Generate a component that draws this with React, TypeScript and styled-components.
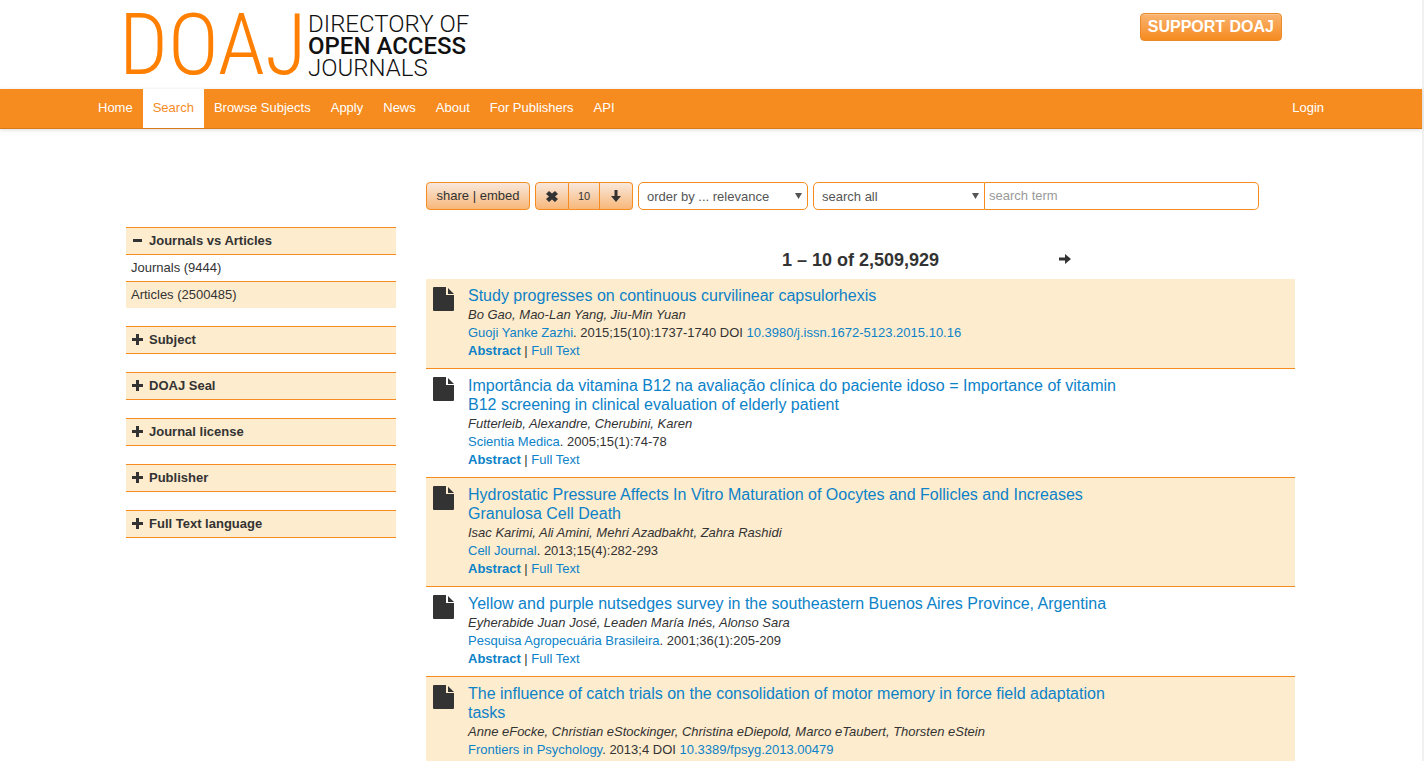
import React from "react";
import styled, { createGlobalStyle, css } from "styled-components";

const ORANGE = "#f68b1f";
const CREAM = "#feecce";

const GlobalStyle = createGlobalStyle`
  * { box-sizing: border-box; }
  html { background: #f1f1f1; }
  body {
    margin: 0;
    background: #f1f1f1;
    color: #333;
    font: 13px/18px "Liberation Sans", Arial, sans-serif;
    overflow-x: hidden;
  }
  a { color: #0c82c8; text-decoration: none; }
  a:hover { text-decoration: underline; }
`;

const Page = styled.div`
  margin-right: 2px;
  min-height: 100vh;
  background: #fff;
`;

const Container = styled.div`
  max-width: 1170px;
  margin: 0 auto;
`;

const Header = styled(Container).attrs({ as: "header" })`
  display: flex;
  justify-content: space-between;
  align-items: flex-start;
  height: 89px;
  padding: 13px 14px 0 0;
`;

const LogoLink = styled.a`
  display: flex;
  margin-left: -7px;
  color: #111;
  &:hover { text-decoration: none; }
`;

const LogoMark = styled.span`
  width: 189px;
  color: #ff7f00;
  font: 300 86px/64px "Roboto Condensed", Roboto, sans-serif;
`;

const LogoWords = styled.span`
  display: flex;
  flex-direction: column;
  font: 300 24px/22px Roboto, sans-serif;
  strong { font-weight: 500; }
`;

const SupportButton = styled.button`
  height: 28px;
  padding: 0 7px;
  border: 1px solid #e88a2c;
  border-radius: 4px;
  background: linear-gradient(#f9b471, ${ORANGE});
  box-shadow: inset 0 1px 0 rgba(255, 255, 255, 0.2);
  color: #fff;
  font: bold 16px/20px "Liberation Sans", Arial, sans-serif;
`;

const NavBar = styled.nav`
  height: 40px;
  background: ${ORANGE};
  border-bottom: 1px solid #d9791a;
  box-shadow: 0 1px 4px rgba(0, 0, 0, 0.15);
`;

const NavInner = styled.div`
  display: flex;
  justify-content: space-between;
  max-width: 1246px;
  margin: 0 auto;
`;

const NavGroup = styled.div`
  display: flex;
`;

const NavLink = styled.a<{ $active?: boolean }>`
  height: 39px;
  padding: 10px;
  color: #fff;
  ${(p) => p.$active && css`
    background: #fff;
    color: ${ORANGE};
  `}
`;

const Body = styled(Container).attrs({ as: "main" })`
  display: flex;
  gap: 30px;
  align-items: flex-start;
  padding: 53px 1px 0 0;
`;

const Sidebar = styled.aside`
  display: flex;
  flex-direction: column;
  flex: 0 0 270px;
  gap: 18px;
  padding-top: 45px;
`;

const FacetHead = styled.button`
  display: flex;
  align-items: center;
  gap: 6px;
  width: 100%;
  height: 28px;
  padding: 0 5px;
  border: 0;
  border-top: 1px solid ${ORANGE};
  border-bottom: 1px solid ${ORANGE};
  background: ${CREAM};
  color: #333;
  font: bold 13px/18px "Liberation Sans", Arial, sans-serif;
`;

const FacetValue = styled.a`
  display: block;
  height: 26px;
  padding: 4px 5px;
  color: #333;
  & + & {
    height: 27px;
    border-top: 1px solid ${ORANGE};
    background: ${CREAM};
  }
`;

const Results = styled.section`
  flex: 1;
  min-width: 0;
`;

const Toolbar = styled.form`
  display: flex;
  gap: 5px;
  margin-right: 36px;
`;

const ToolGroup = styled.div`
  display: flex;
`;

const ToolButton = styled.button<{ $width: number; $small?: boolean }>`
  display: flex;
  align-items: center;
  justify-content: center;
  width: ${(p) => p.$width}px;
  height: 28px;
  padding: 0;
  border: 1px solid ${ORANGE};
  background: linear-gradient(#f8e8dc, #f8b779);
  color: #333;
  font: ${(p) => (p.$small ? 11 : 13)}px/18px "Liberation Sans", Arial, sans-serif;
  & + & { border-left: 0; }
  &:first-child { border-radius: 4px 0 0 4px; }
  &:last-child { border-radius: 0 4px 4px 0; }
  &:only-child { border-radius: 4px; }
`;

const SelectBox = styled.label<{ $width: number; $joined?: boolean }>`
  position: relative;
  flex: 0 0 ${(p) => p.$width}px;
  svg {
    position: absolute;
    right: 6px;
    top: 11px;
    pointer-events: none;
  }
  select {
    width: 100%;
    height: 28px;
    padding: 2px 8px 0;
    appearance: none;
    border: 1px solid ${ORANGE};
    border-radius: ${(p) => (p.$joined ? "5px 0 0 5px" : "5px")};
    background: #fff;
    color: #555;
    font: 13px/18px "Liberation Sans", Arial, sans-serif;
  }
`;

const SearchGroup = styled.div`
  display: flex;
  flex: 1;
`;

const SearchInput = styled.input`
  flex: 1;
  min-width: 0;
  height: 28px;
  padding: 0 4px 2px;
  border: 1px solid ${ORANGE};
  border-left: 0;
  border-radius: 0 5px 5px 0;
  font: 13px/18px "Liberation Sans", Arial, sans-serif;
  &::placeholder { color: #999; }
`;

const Pager = styled.div`
  display: grid;
  grid-template-columns: 1fr auto 1fr;
  align-items: center;
  height: 69px;
  padding-top: 30px;
`;

const PagerCount = styled.h3`
  margin: 0;
  font-size: 18px;
  line-height: 20px;
`;

const NextButton = styled.button`
  justify-self: start;
  display: flex;
  margin-left: 120px;
  padding: 0 0 2px;
  border: 0;
  background: none;
`;

const ResultRow = styled.article`
  display: flex;
  gap: 14px;
  padding: 7px 7px 8px;
  border-bottom: 1px solid ${ORANGE};
  &:nth-child(odd) { background: ${CREAM}; }
  > svg { flex: none; }
`;

const ResultText = styled.div`
  max-width: 655px;
`;

const Title = styled.a`
  display: block;
  padding-bottom: 1px;
  font-size: 16px;
  line-height: 19px;
`;

const Line = styled.div`
  line-height: 18px;
`;

const Caret = () => (
  <svg width="7" height="7" viewBox="0 0 7 7" aria-hidden="true">
    <path d="M0 0h7L3.5 6z" fill="#555" />
  </svg>
);

const Plus = () => (
  <svg width="12" height="12" viewBox="0 0 12 12" aria-hidden="true">
    <path d="M5 0h3v4h4v3H8v4H5V7H1V4h4z" fill="#333" />
  </svg>
);

const Minus = () => (
  <svg width="12" height="12" viewBox="0 0 12 12" aria-hidden="true">
    <path d="M2 4h9v3H2z" fill="#333" />
  </svg>
);

const FileIcon = () => (
  <svg width="21" height="25" viewBox="0 0 21 25" aria-hidden="true">
    <path d="M1 1h12v8h8v15q0 1-1 1H1q-1 0-1-1V2q0-1 1-1z M15 2l6 6h-6z" fill="#333" />
  </svg>
);

const Remove = () => (
  <svg width="12" height="11" viewBox="0 0 12 11" aria-hidden="true">
    <path d="M3 0l3 2.500L9 0l3 3-3 2.500L12 8l-3 3-3-2.500L3 11 0 8l3-2.500L0 3z" fill="#333" />
  </svg>
);

const ArrowDown = () => (
  <svg width="10" height="12" viewBox="0 0 10 12" aria-hidden="true">
    <path d="M3.500 0h3v6H10l-5 6-5-6h3.500z" fill="#333" />
  </svg>
);

const ArrowRight = () => (
  <svg width="12" height="10" viewBox="0 0 12 10" aria-hidden="true">
    <path d="M0 3.500h6V0l6 5-6 5V6.500H0z" fill="#333" />
  </svg>
);

type Result = {
  title: string;
  authors: string;
  journal: string;
  issue: string;
  doi?: string;
};

const results: Result[] = [
  {
    title: "Study progresses on continuous curvilinear capsulorhexis",
    authors: "Bo Gao, Mao-Lan Yang, Jiu-Min Yuan",
    journal: "Guoji Yanke Zazhi",
    issue: "2015;15(10):1737-1740",
    doi: "10.3980/j.issn.1672-5123.2015.10.16",
  },
  {
    title: "Importância da vitamina B12 na avaliação clínica do paciente idoso = Importance of vitamin B12 screening in clinical evaluation of elderly patient",
    authors: "Futterleib, Alexandre, Cherubini, Karen",
    journal: "Scientia Medica",
    issue: "2005;15(1):74-78",
  },
  {
    title: "Hydrostatic Pressure Affects In Vitro Maturation of Oocytes and Follicles and Increases Granulosa Cell Death",
    authors: "Isac Karimi, Ali Amini, Mehri Azadbakht, Zahra Rashidi",
    journal: "Cell Journal",
    issue: "2013;15(4):282-293",
  },
  {
    title: "Yellow and purple nutsedges survey in the southeastern Buenos Aires Province, Argentina",
    authors: "Eyherabide Juan José, Leaden María Inés, Alonso Sara",
    journal: "Pesquisa Agropecuária Brasileira",
    issue: "2001;36(1):205-209",
  },
  {
    title: "The influence of catch trials on the consolidation of motor memory in force field adaptation tasks",
    authors: "Anne eFocke, Christian eStockinger, Christina eDiepold, Marco eTaubert, Thorsten eStein",
    journal: "Frontiers in Psychology",
    issue: "2013;4",
    doi: "10.3389/fpsyg.2013.00479",
  },
];

const navItems = ["Home", "Search", "Browse Subjects", "Apply", "News", "About", "For Publishers", "API"];
const closedFacets = ["Subject", "DOAJ Seal", "Journal license", "Publisher", "Full Text language"];

export default function App() {
  return (
    <>
      <GlobalStyle />
      <Page>
        <Header>
          <LogoLink href="#">
            <LogoMark>DOAJ</LogoMark>
            <LogoWords>
              <span>DIRECTORY OF</span>
              <strong>OPEN ACCESS</strong>
              <span>JOURNALS</span>
            </LogoWords>
          </LogoLink>
          <SupportButton type="button">SUPPORT DOAJ</SupportButton>
        </Header>
        <NavBar>
          <NavInner>
            <NavGroup>
              {navItems.map((item) => (
                <NavLink key={item} href="#" $active={item === "Search"}>{item}</NavLink>
              ))}
            </NavGroup>
            <NavGroup>
              <NavLink href="#">Login</NavLink>
            </NavGroup>
          </NavInner>
        </NavBar>
        <Body>
          <Sidebar>
            <div>
              <FacetHead type="button"><Minus />Journals vs Articles</FacetHead>
              <FacetValue href="#">Journals (9444)</FacetValue>
              <FacetValue href="#">Articles (2500485)</FacetValue>
            </div>
            {closedFacets.map((name) => (
              <FacetHead type="button" key={name}><Plus />{name}</FacetHead>
            ))}
          </Sidebar>
          <Results>
            <Toolbar>
              <ToolGroup>
                <ToolButton type="button" $width={104}>share | embed</ToolButton>
              </ToolGroup>
              <ToolGroup>
                <ToolButton type="button" $width={34} aria-label="Clear search"><Remove /></ToolButton>
                <ToolButton type="button" $width={31} $small>10</ToolButton>
                <ToolButton type="button" $width={33} aria-label="Sort descending"><ArrowDown /></ToolButton>
              </ToolGroup>
              <SelectBox $width={170}>
                <select aria-label="Order by" defaultValue="relevance">
                  <option value="relevance">order by ... relevance</option>
                </select>
                <Caret />
              </SelectBox>
              <SearchGroup>
                <SelectBox $width={172} $joined>
                  <select aria-label="Search field" defaultValue="all">
                    <option value="all">search all</option>
                  </select>
                  <Caret />
                </SelectBox>
                <SearchInput type="text" aria-label="Search term" placeholder="search term" />
              </SearchGroup>
            </Toolbar>
            <Pager>
              <span />
              <PagerCount>1 – 10 of 2,509,929</PagerCount>
              <NextButton type="button" aria-label="Next page"><ArrowRight /></NextButton>
            </Pager>
            <div>
              {results.map((r) => (
                <ResultRow key={r.title}>
                  <FileIcon />
                  <ResultText>
                    <Title href="#">{r.title}</Title>
                    <Line><em>{r.authors}</em></Line>
                    <Line>
                      <a href="#">{r.journal}</a>. {r.issue}
                      {r.doi && <> DOI <a href="#">{r.doi}</a></>}
                    </Line>
                    <Line>
                      <a href="#"><strong>Abstract</strong></a> | <a href="#">Full Text</a>
                    </Line>
                  </ResultText>
                </ResultRow>
              ))}
            </div>
          </Results>
        </Body>
      </Page>
    </>
  );
}
